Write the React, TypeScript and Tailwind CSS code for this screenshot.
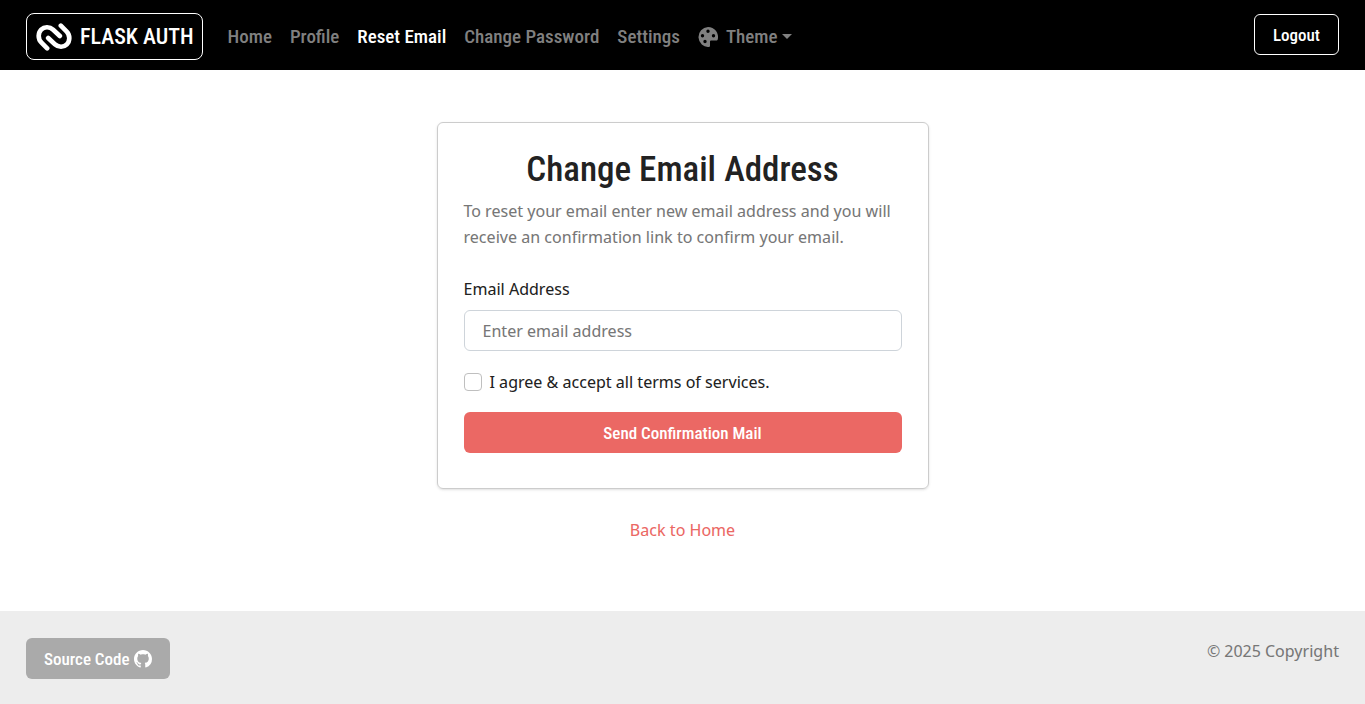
import { BsGithub } from 'react-icons/bs';

const links = ['Home', 'Profile', 'Reset Email', 'Change Password', 'Settings'];
const condensed = "font-['Roboto_Condensed','Roboto',sans-serif] font-medium";

function LinkLogo() {
  return (
    <svg viewBox="0 0 105 84" className="h-7 w-9" fill="none" stroke="currentColor" strokeWidth="14" strokeLinecap="round" strokeLinejoin="round" aria-hidden="true">
      <path d="M73 8 L90 25 C102 37 100 55 91 64 C82 73 66 74 55 64 L35 45" />
      <path d="M32 76 L15 59 C3 47 5 29 14 20 C23 11 39 10 50 20 L70 39" />
    </svg>
  );
}

function Palette() {
  return (
    <svg viewBox="0 0 20 20" className="size-5" fill="currentColor" aria-hidden="true">
      <path fillRule="evenodd" d="M10 0a10 10 0 1 0 1 20c.8-.1 1-.5 1-1.200v-4.300q0-1 1-1h5.300c.8 0 1.200-.2 1.400-1A10 10 0 0 0 10 0M10 2.600a1.700 1.700 0 1 1 0 3.400a1.700 1.700 0 0 1 0-3.400M4.500 7a1.700 1.700 0 1 1 0 3.400a1.700 1.700 0 0 1 0-3.400M15.500 7a1.700 1.700 0 1 1 0 3.400a1.700 1.700 0 0 1 0-3.400M7 12.800a1.700 1.700 0 1 1 0 3.400a1.700 1.700 0 0 1 0-3.400" />
    </svg>
  );
}

export default function App() {
  return (
    <div className="flex min-h-screen flex-col bg-white font-['Noto_Sans_Display','Noto_Sans',sans-serif] text-[17px] leading-[26px] text-[#222]">
      <header className="flex items-center justify-between bg-black px-[26px] pt-[13px] pb-[10px] text-white">
        <div className="flex items-center gap-6">
          <a href="#" className={`${condensed} flex h-[47px] items-center gap-2 rounded-lg border border-white px-[9px] text-[22px]`}>
            <LinkLogo />
            <span>FLASK AUTH</span>
          </a>
          <nav className={`${condensed} flex items-center gap-[18px] text-[19px] text-[#808080]`}>
            {links.map((link) => (
              <a key={link} href="#" className={link === 'Reset Email' ? 'text-white' : ''}>{link}</a>
            ))}
            <button type="button" className="flex items-center">
              <Palette />
              <span className="ml-2">Theme</span>
              <span className="ml-1 border-x-5 border-t-5 border-x-transparent border-t-current" />
            </button>
          </nav>
        </div>
        <button type="button" className={`${condensed} mb-1 h-[41px] rounded-md border border-white px-[18px] text-[17px]`}>Logout</button>
      </header>

      <main className="flex flex-1 flex-col items-center px-4 pt-[52px]">
        <section className="w-full max-w-[492px] rounded-md border border-[#ccc] px-[26px] pt-[26px] pb-[35px] shadow-sm">
          <h1 className={`${condensed} text-center text-[35px] leading-[42px]`}>Change Email Address</h1>
          <p className="mt-[7px] text-[#777]">To reset your email enter new email address and you will receive an confirmation link to confirm your email.</p>
          <form className="mt-[26px]">
            <label htmlFor="email" className="block">Email Address</label>
            <input id="email" type="email" placeholder="Enter email address" className="mt-2 block h-[41px] w-full rounded-md border border-[#ced4da] px-[18px] placeholder:text-[#777]" />
            <div className="mt-[18px] flex items-center gap-2">
              <input id="terms" type="checkbox" className="size-[18px] appearance-none rounded border border-[#bfbfbf] bg-white checked:bg-[#eb6864]" />
              <label htmlFor="terms">I agree &amp; accept all terms of services.</label>
            </div>
            <button type="button" className={`${condensed} mt-[17px] h-[41px] w-full rounded-md bg-[#eb6864] text-[17px] text-white`}>Send Confirmation Mail</button>
          </form>
        </section>
        <a href="#" className="mt-7 text-[#eb6864]">Back to Home</a>
      </main>

      <footer className="flex items-start justify-between bg-[#ededed] px-[26px] pt-[27px] pb-[25px]">
        <a href="#" className={`${condensed} flex h-[41px] items-center gap-1 rounded-md bg-[#aaa] px-[18px] text-[17px] text-white`}>
          Source Code <BsGithub className="size-[18px]" />
        </a>
        <p className="text-[#777]">© 2025 Copyright</p>
      </footer>
    </div>
  );
}
